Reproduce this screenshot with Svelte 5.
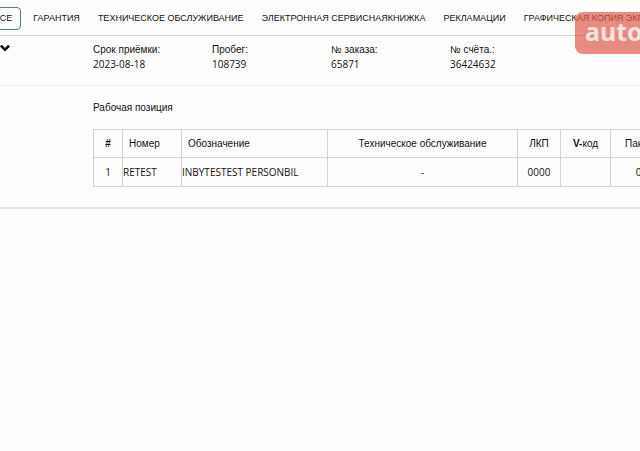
<script lang="ts">
  const tabs = [
    'ВСЕ',
    'ГАРАНТИЯ',
    'ТЕХНИЧЕСКОЕ ОБСЛУЖИВАНИЕ',
    'ЭЛЕКТРОННАЯ СЕРВИСНАЯКНИЖКА',
    'РЕКЛАМАЦИИ',
    'ГРАФИЧЕСКАЯ КОПИЯ ЭКРАНА',
  ];

  const details = [
    { label: 'Срок приёмки:', value: '2023-08-18' },
    { label: 'Пробег:', value: '108739' },
    { label: '№ заказа:', value: '65871' },
    { label: '№ счёта.:', value: '36424632' },
  ];

  let active = $state(0);
  let open = $state(true);
</script>

<div class="page">
  <nav class="tabs">
    {#each tabs as tab, i}
      <button class="tab" class:active={active === i} onclick={() => (active = i)}>{tab}</button>
    {/each}
  </nav>

  <section class="summary">
    <button class="toggle" aria-label="Подробности" aria-expanded={open} onclick={() => (open = !open)}>
      <svg viewBox="0 0 10 8" width="10" height="8">
        <path d="M0 2.6 1.8 0.8 5 3.9 8.2 0.8 10 2.6 5 7.6Z" fill="#050505" />
      </svg>
    </button>
    <dl class="details">
      {#each details as item}
        <div>
          <dt>{item.label}</dt>
          <dd>{item.value}</dd>
        </div>
      {/each}
    </dl>
  </section>

  {#if open}
    <section class="positions">
      <h2>Рабочая позиция</h2>
      <table>
        <colgroup>
          <col class="c-index" />
          <col class="c-number" />
          <col class="c-name" />
          <col class="c-service" />
          <col class="c-paint" />
          <col class="c-vcode" />
          <col class="c-package" />
        </colgroup>
        <thead>
          <tr>
            <th class="strong">#</th>
            <th class="left">Номер</th>
            <th class="left">Обозначение</th>
            <th>Техническое обслуживание</th>
            <th>ЛКП</th>
            <th><b>V-</b>код</th>
            <th>Пакет</th>
          </tr>
        </thead>
        <tbody>
          <tr>
            <td>1</td>
            <td class="left">RETEST</td>
            <td class="left">INBYTESTEST PERSONBIL</td>
            <td>-</td>
            <td>0000</td>
            <td></td>
            <td>0</td>
          </tr>
        </tbody>
      </table>
    </section>
  {/if}

  <div class="badge">auto.ru</div>
</div>

<style>
  :global(body) {
    background: #fdfdfd;
    overflow: hidden;
  }

  .page {
    position: relative;
    overflow: hidden;
    color: #111;
    font: 10px/15px "Liberation Sans", Arial, sans-serif;
  }

  .tabs {
    display: flex;
    gap: 6px;
    margin-left: -15px;
    padding: 7px 0 5px;
    border-bottom: 1px solid #d6d6d6;
    white-space: nowrap;
  }

  .tab {
    flex: none;
    height: 23px;
    padding: 0 5px;
    border: 1px solid transparent;
    border-radius: 4px;
    background: none;
    color: #111;
    font: inherit;
    font-size: 9px;
  }

  .tab.active {
    padding: 0 8px;
    border-color: #54788a;
  }

  .summary {
    display: flex;
    padding: 6px 0 13px;
    border-bottom: 1px solid #f0f0f0;
  }

  .toggle {
    flex: none;
    display: flex;
    width: 93px;
    padding: 2px 0 0;
    border: 0;
    background: none;
  }

  .details {
    display: grid;
    grid-template-columns: repeat(4, 119px);
    margin: 0;
  }

  dd {
    margin: 0;
    font-family: "Open Sans", sans-serif;
  }

  .positions {
    padding: 14px 0 20px 93px;
    border-bottom: 2px solid #e2e2e2;
  }

  h2 {
    margin: 0 0 14px;
    font-size: 10px;
    font-weight: 400;
  }

  table {
    width: 573px;
    table-layout: fixed;
    border-collapse: collapse;
  }

  .c-index { width: 29px; }
  .c-number { width: 59px; }
  .c-name { width: 146px; }
  .c-service { width: 190px; }
  .c-paint { width: 43px; }
  .c-vcode { width: 50px; }
  .c-package { width: 56px; }

  th,
  td {
    border: 1px solid #d2d2d2;
    padding: 0;
    text-align: center;
    white-space: nowrap;
  }

  th {
    height: 27px;
    font-weight: 400;
  }

  th.strong {
    font-weight: 700;
  }

  td {
    height: 28px;
    font-family: "Open Sans", sans-serif;
  }

  .left {
    text-align: left;
  }

  th.left {
    padding-left: 6px;
  }

  .badge {
    position: absolute;
    top: 12px;
    left: 575px;
    padding: 0 10px 4px;
    border-radius: 8px;
    background: rgba(222, 91, 76, 0.7);
    color: #fae3df;
    font: 700 25px/38px "Noto Sans", sans-serif;
    pointer-events: none;
  }
</style>
